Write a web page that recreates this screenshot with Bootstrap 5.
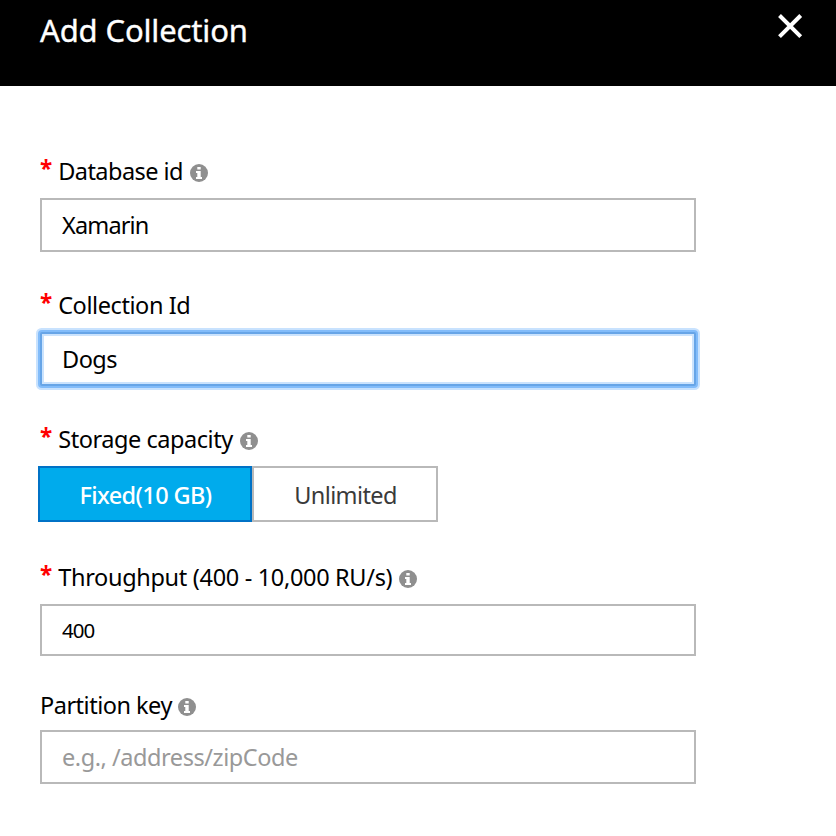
<!DOCTYPE html>
<html lang="en">
<head>
<meta charset="utf-8">
<meta name="viewport" content="width=device-width, initial-scale=1">
<title>Add Collection</title>
<link href="https://cdn.jsdelivr.net/npm/bootstrap@5.3.0/dist/css/bootstrap.min.css" rel="stylesheet">
<style>
body { font-family: "Noto Sans", "Open Sans", sans-serif; font-size: 23.5px; color: #000; }
.blade-header { height: 86px; padding: 9px 33px 0 40px; }
.blade-title { font-size: 31px; line-height: 42px; letter-spacing: -.14px; -webkit-text-stroke: .35px #fff; }
.blade-close { width: 26px; height: 26px; margin-top: 4px; }
.blade-body { width: 656px; margin: 69px 0 0 40px; }
.field-group { margin-bottom: 37px; }
.field-group-seg { margin-bottom: 39px; }
.field-group-ru { margin-bottom: 33px; }
.field-label { height: 32px; line-height: 32px; margin-bottom: 11px; white-space: nowrap; }
.field-group-pk .field-label { margin-bottom: 9px; }
.field-group-pk .info { margin-left: 6px; }
.req { width: 18.2px; height: 36px; color: #f00; font-weight: 700; font-size: 22.5px; }
.txt-db { letter-spacing: -.55px; }
.txt-coll { letter-spacing: -.42px; }
.txt-cap { letter-spacing: -.45px; }
.txt-ru { letter-spacing: -.32px; }
.txt-pk { letter-spacing: -.5px; }
.info { width: 18px; height: 18px; margin: 3px 0 0 7px; }
.field-input { height: 54px; padding: 0 20px; border: 2px solid #b9b9b9; font-size: 23.5px; line-height: 32px; color: #000; letter-spacing: -.5px; }
#db { letter-spacing: -.85px; }
.field-input:focus, .field-input.is-active { border-color: #67a5e7; border-radius: 2px; box-shadow: 0 0 0 2px #82bcfa, 0 0 0 4px #c8e2fe, inset 0 0 0 2px #cbe3fd; }
.field-input::placeholder { color: #999; opacity: 1; letter-spacing: -.45px; }
.field-short { height: 52px; font-size: 20.5px; letter-spacing: -1px; }
.seg { margin-left: -2px; width: 400px; }
.seg .btn { height: 56px; padding: 2px 0 0; border: 2px solid #b9b9b9; font-size: 23.5px; line-height: 32px; color: #3a3a3a; letter-spacing: -.6px; }
.seg .seg-on { flex: 0 0 214px; padding-left: 1px; background: #00abec; border-color: #0072c6; color: #fff; font-weight: 500; }
.seg .seg-off { flex: 0 0 186px; padding-left: 1px; }
</style>
<script src="https://cdn.jsdelivr.net/npm/bootstrap@5.3.0/dist/js/bootstrap.bundle.min.js"></script>
</head>
<body class="bg-white">
<svg class="d-none">
  <symbol id="info" viewBox="0 0 18 18"><circle cx="9" cy="9" r="9" fill="#8f8f8f"/><path fill="#fff" d="M7.300 2.900h3.400v2.700H7.300zM6 6.900h4.700v6.200H12v2H6v-2h1.300V8.900H6z"/></symbol>
</svg>
<header class="blade-header bg-black text-white d-flex justify-content-between align-items-start">
  <h1 class="blade-title fw-normal m-0">Add Collection</h1>
  <button type="button" class="blade-close btn p-0 border-0 d-flex" aria-label="Close">
    <svg width="26" height="26" viewBox="0 0 26 26" fill="none" stroke="#fff" stroke-width="4"><path d="M2.500 2.500l21.200 21.200M23.700 2.500L2.500 23.700"/></svg>
  </button>
</header>
<form class="blade-body">
  <div class="field-group">
    <label class="field-label d-flex align-items-center" for="db"><span class="req">*</span><span class="txt-db">Database id</span><svg class="info"><use href="#info"/></svg></label>
    <input id="db" class="field-input form-control rounded-0" value="Xamarin">
  </div>
  <div class="field-group">
    <label class="field-label d-flex align-items-center" for="coll"><span class="req">*</span><span class="txt-coll">Collection Id</span></label>
    <input id="coll" class="field-input is-active form-control" value="Dogs">
  </div>
  <div class="field-group-seg">
    <div class="field-label d-flex align-items-center"><span class="req">*</span><span class="txt-cap">Storage capacity</span><svg class="info"><use href="#info"/></svg></div>
    <div class="seg d-flex">
      <button type="button" class="seg-on btn rounded-0">Fixed(10 GB)</button>
      <button type="button" class="seg-off btn rounded-0">Unlimited</button>
    </div>
  </div>
  <div class="field-group-ru">
    <label class="field-label d-flex align-items-center" for="ru"><span class="req">*</span><span class="txt-ru">Throughput (400 - 10,000 RU/s)</span><svg class="info"><use href="#info"/></svg></label>
    <input id="ru" class="field-input field-short form-control rounded-0" value="400">
  </div>
  <div class="field-group-pk">
    <label class="field-label d-flex align-items-center" for="pk"><span class="txt-pk">Partition key</span><svg class="info"><use href="#info"/></svg></label>
    <input id="pk" class="field-input form-control rounded-0" placeholder="e.g., /address/zipCode">
  </div>
</form>
</body>
</html>
